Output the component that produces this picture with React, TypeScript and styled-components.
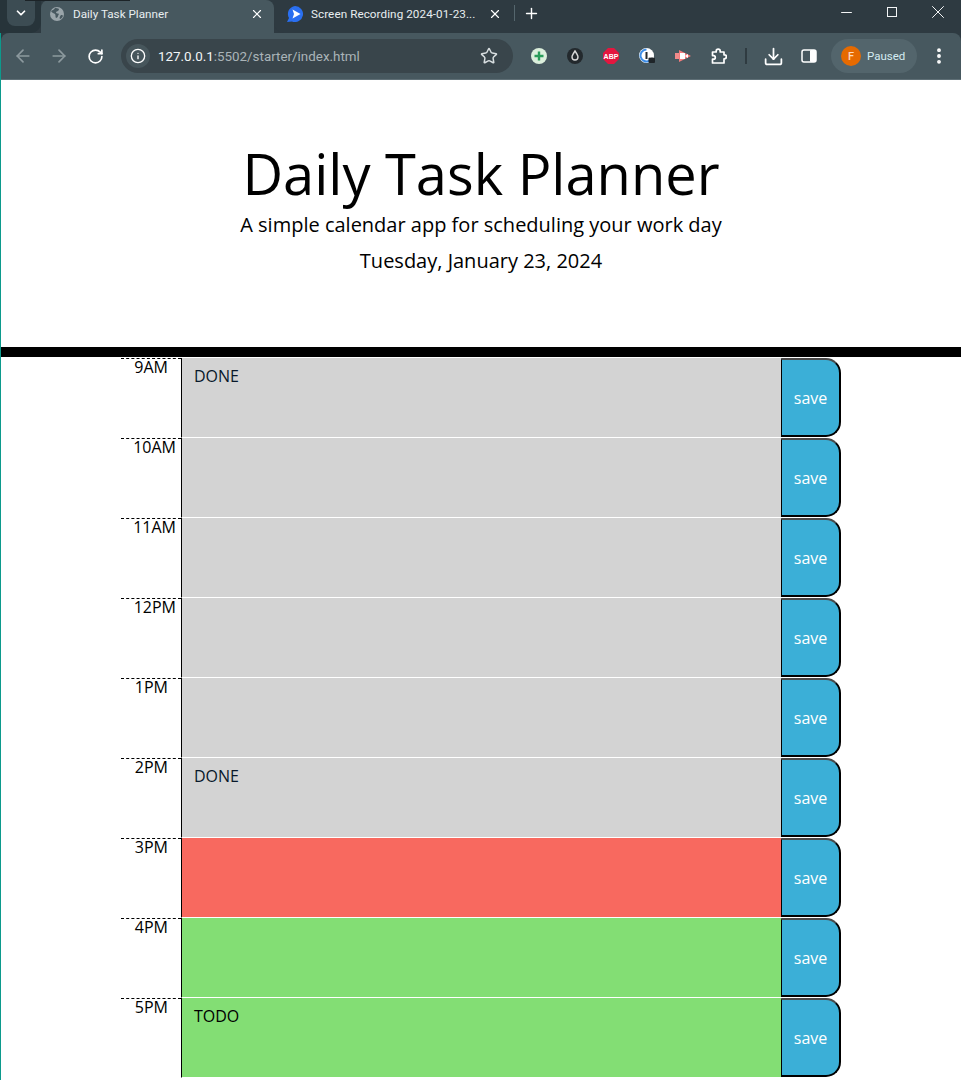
import styled, { createGlobalStyle } from 'styled-components';
import { ArrowLeft, ArrowRight, ChevronDown, Download, EllipsisVertical, Info, Minus, Plus, RotateCw, Star, X } from 'lucide-react';

const GlobalStyle = createGlobalStyle`
  html, body {
    margin: 0;
    padding: 0;
    height: 1080px;
    overflow: hidden;
    background: #fff;
  }
  * {
    box-sizing: border-box;
  }
`;

const Page = styled.div`
  width: 961px;
  height: 1080px;
  overflow: hidden;
  background: #fff;
`;

const TabStrip = styled.div`
  position: relative;
  height: 33px;
  display: flex;
  align-items: flex-start;
  background: #2e3a41;
  font-family: 'Roboto', 'Liberation Sans', sans-serif;
  color: #e8eef0;
  font-size: 11.7px;

  &:before {
    content: '';
    position: absolute;
    top: 0;
    left: 25px;
    width: 105px;
    height: 1px;
    background: #1c2327;
  }
`;

const TabSearch = styled.div`
  width: 41px;
  height: 33px;
  padding: 0 0 6px 7px;
  background: #27343a;
  border-radius: 0 0 10px 0;
  flex: none;
`;

const TabSearchButton = styled.div`
  width: 28px;
  height: 26px;
  border-radius: 0 0 8px 8px;
  background: #3c4c53;
  display: flex;
  align-items: center;
  justify-content: center;
  color: #fff;
`;

const ActiveTab = styled.div`
  width: 233px;
  height: 33px;
  flex: none;
  display: flex;
  align-items: center;
  padding: 0 10px 5px 8px;
  background: #47585f;
  border-radius: 8px 8px 0 0;
`;

const InactiveTab = styled.div`
  width: 240px;
  height: 33px;
  flex: none;
  display: flex;
  align-items: center;
  padding: 0 12px 5px 13px;
  background: #2e3a41;
  border-radius: 0 0 0 10px;
  letter-spacing: 0.07px;
`;

const TabFavicon = styled.svg`
  width: 16px;
  height: 16px;
  flex: none;
  margin-right: 8px;
`;

const TabTitle = styled.span`
  flex: 1;
  white-space: nowrap;
  overflow: hidden;
`;

const TabClose = styled.span`
  display: flex;
  color: #fff;
`;

const TabDivider = styled.span`
  width: 1px;
  height: 16px;
  margin: 5px 0 0 0;
  background: #55666d;
  flex: none;
`;

const NewTab = styled.span`
  display: flex;
  color: #fff;
  margin: 5px 0 0 8px;
`;

const WindowControls = styled.div`
  margin-left: auto;
  display: flex;
  color: #f3f5f6;
  padding: 3px 0 0;
`;

const WindowButton = styled.span`
  width: 46px;
  height: 18px;
  display: flex;
  align-items: center;
  justify-content: center;
`;

const ToolbarFrame = styled.div`
  background: #2e3a41;
  border-left: 1px solid #0c9a8c;
`;

const Toolbar = styled.div`
  height: 47px;
  display: flex;
  align-items: center;
  padding: 0 0 0 4px;
  background: #47585f;
  border-radius: 8px 8px 0 0;
  border-bottom: 1px solid #5f6f76;
  font-family: 'Roboto', 'Liberation Sans', sans-serif;
`;

const NavButton = styled.span<{ $dim?: boolean }>`
  width: 36px;
  display: flex;
  justify-content: center;
  color: ${(p) => (p.$dim ? '#8d9a9f' : '#fff')};
`;

const Omnibox = styled.div`
  width: 392px;
  height: 34px;
  margin-left: 8px;
  padding: 0 15px 0 5px;
  flex: none;
  display: flex;
  align-items: center;
  background: #39454b;
  border-radius: 17px;
  font-size: 13.4px;
  color: #aab4b8;
`;

const SiteInfo = styled.span`
  width: 24px;
  height: 24px;
  border-radius: 50%;
  background: #47565c;
  display: flex;
  align-items: center;
  justify-content: center;
  color: #fff;
  margin-right: 8px;
`;

const Url = styled.span`
  flex: 1;
`;

const Host = styled.span`
  color: #f2f6f7;
`;

const Extensions = styled.div`
  display: flex;
  align-items: center;
  margin-left: 18px;
  gap: 20px;
`;

const ExtIcon = styled.svg`
  width: 16px;
  height: 16px;
  flex: none;
`;

const BadgeText = styled.text`
  font-family: 'Liberation Sans', sans-serif;
  font-size: 7px;
  font-weight: 700;
  fill: #fff;
`;

const ToolDivider = styled.span`
  width: 2px;
  height: 16px;
  margin-left: 18px;
  background: #2f3b41;
  flex: none;
`;

const ToolIcon = styled.span<{ $left: number }>`
  display: flex;
  color: #fff;
  margin-left: ${(p) => p.$left}px;
`;

const ProfilePill = styled.div`
  width: 86px;
  height: 34px;
  margin-left: 14px;
  padding-left: 10px;
  flex: none;
  display: flex;
  align-items: center;
  border-radius: 17px;
  background: #53656c;
  font-size: 11.5px;
  color: #d5ecf2;
`;

const Avatar = styled.span`
  width: 20px;
  height: 20px;
  margin-right: 6px;
  border-radius: 50%;
  background: #e66a00;
  color: #ffd9bd;
  font-size: 11px;
  font-weight: 500;
  display: flex;
  align-items: center;
  justify-content: center;
`;

const Content = styled.div`
  border-left: 1px solid #0c9a8c;
  height: 1000px;
  font-family: 'Open Sans', 'Liberation Sans', sans-serif;
  color: #000;
`;

const Jumbotron = styled.header`
  height: 277px;
  padding-top: 55px;
  text-align: center;
  border-bottom: 10px solid #000;
`;

const Title = styled.h1`
  margin: 0;
  font-size: 56px;
  font-weight: 400;
  line-height: 76px;
`;

const Lead = styled.p`
  margin: 0;
  font-size: 20px;
  line-height: 28px;
`;

const CurrentDay = styled(Lead)`
  margin-top: 8px;
`;

const Planner = styled.main`
  width: 720px;
  margin: 1px 0 0 120px;
`;

const TimeBlock = styled.div`
  display: grid;
  grid-template-columns: 60px 600px 60px;
  align-items: stretch;
  height: 80px;
`;

const Hour = styled.div`
  border-top: 1px dashed #000;
  font-size: 16px;
  line-height: 16px;
  padding: 0 5px 0 0;
  text-align: right;
`;

const HourLabel = styled.span<{ $wide: boolean }>`
  display: block;
  padding-right: ${(p) => (p.$wide ? 0 : 8)}px;
`;

const colours = { past: '#d3d3d3', present: '#f8695f', future: '#83de74' };

const Description = styled.div<{ $state: keyof typeof colours }>`
  background: ${(p) => colours[p.$state]};
  border-left: 1px solid #000;
  border-bottom: 1px solid #fff;
  padding: 8px 12px;
  font-size: 16px;
  line-height: 20px;
  color: ${(p) => (p.$state === 'past' ? '#08182a' : '#000')};
`;

const SaveButton = styled.button`
  padding: 1px 0 0;
  margin: 0;
  height: 79px;
  background: #3bafd7;
  color: #fff;
  font-family: inherit;
  font-size: 16px;
  border-width: 2px 2px 2px 1px;
  border-style: solid;
  border-color: #4a4a4a #000 #000 #000;
  border-radius: 0 15px 15px 0;
`;

const hours: { label: string; state: keyof typeof colours; text?: string }[] = [
  { label: '9AM', state: 'past', text: 'DONE' },
  { label: '10AM', state: 'past' },
  { label: '11AM', state: 'past' },
  { label: '12PM', state: 'past' },
  { label: '1PM', state: 'past' },
  { label: '2PM', state: 'past', text: 'DONE' },
  { label: '3PM', state: 'present' },
  { label: '4PM', state: 'future' },
  { label: '5PM', state: 'future', text: 'TODO' },
];

const App = () => {
  return (
    <Page>
      <GlobalStyle />
      <TabStrip>
        <TabSearch>
          <TabSearchButton>
            <ChevronDown size={14} strokeWidth={3} />
          </TabSearchButton>
        </TabSearch>
        <ActiveTab>
          <TabFavicon viewBox="0 0 16 16">
            <circle cx="8" cy="8" r="7" fill="#9aa5aa" />
            <path d="M6 2c-1 2-3 2-4 3 1 2 3 2 4 3 1 1 0 3 1 4 2 0 2-3 3-4-1-1-3 0-3-2 1-1 3-1 3-3-1-1-3-1-4-1z" fill="#47585f" />
            <path d="M12 9c1 0 2 0 2 1-1 2-2 3-3 3-1-1 0-3 1-4z" fill="#47585f" />
          </TabFavicon>
          <TabTitle>Daily Task Planner</TabTitle>
          <TabClose>
            <X size={14} strokeWidth={2} />
          </TabClose>
        </ActiveTab>
        <InactiveTab>
          <TabFavicon viewBox="0 0 16 16">
            <path d="M8 0a8 8 0 1 1-3 15.400L0 16l2-4A8 8 0 0 1 8 0z" fill="#2a6ff0" />
            <path d="M5.500 3.500l8 4.500-8 4.500 1.500-4.500z" fill="#fff" />
          </TabFavicon>
          <TabTitle>Screen Recording 2024-01-23...</TabTitle>
          <TabClose>
            <X size={14} strokeWidth={2} />
          </TabClose>
        </InactiveTab>
        <TabDivider />
        <NewTab>
          <Plus size={17} strokeWidth={2} />
        </NewTab>
        <WindowControls>
          <WindowButton>
            <Minus size={17} strokeWidth={1} absoluteStrokeWidth />
          </WindowButton>
          <WindowButton>
            <svg width="10" height="10" viewBox="0 0 10 10">
              <rect x="0.500" y="0.500" width="9" height="9" fill="none" stroke="currentColor" />
            </svg>
          </WindowButton>
          <WindowButton>
            <X size={22} strokeWidth={1} absoluteStrokeWidth />
          </WindowButton>
        </WindowControls>
      </TabStrip>
      <ToolbarFrame>
        <Toolbar>
          <NavButton $dim>
            <ArrowLeft size={20} />
          </NavButton>
          <NavButton $dim>
            <ArrowRight size={20} />
          </NavButton>
          <NavButton>
            <RotateCw size={17} strokeWidth={2.4} />
          </NavButton>
          <Omnibox>
            <SiteInfo>
              <Info size={16} />
            </SiteInfo>
            <Url>
              <Host>127.0.0.1</Host>:5502/starter/index.html
            </Url>
            <Star size={18} color="#d8dee0" />
          </Omnibox>
          <Extensions>
            <ExtIcon viewBox="0 0 16 16">
              <circle cx="8" cy="8" r="8" fill="#dcefdc" />
              <path d="M8 3.500v9M3.500 8h9" stroke="#2a9d5a" strokeWidth="2.400" />
            </ExtIcon>
            <ExtIcon viewBox="0 0 16 16">
              <circle cx="8" cy="8" r="8" fill="#23292d" />
              <path d="M8 3c2 3 3 4.500 3 6a3 3 0 0 1-6 0c0-1.500 1-3 3-6z" fill="none" stroke="#d8d8d8" strokeWidth="1.400" />
            </ExtIcon>
            <ExtIcon viewBox="0 0 16 16">
              <path d="M5 0h6l5 5v6l-5 5H5l-5-5V5z" fill="#e4163f" />
              <BadgeText x="8" y="10.500" textAnchor="middle">ABP</BadgeText>
            </ExtIcon>
            <ExtIcon viewBox="0 0 16 16">
              <circle cx="7.500" cy="7.500" r="7.500" fill="#fff" />
              <path d="M7.500 1.500a6 6 0 1 0 3 11.200" fill="none" stroke="#3d8ee8" strokeWidth="2" />
              <rect x="6.500" y="4" width="2" height="7" fill="#23292d" />
              <rect x="9.500" y="9.500" width="6.500" height="5.500" rx="1" fill="#1f2529" />
              <path d="M11 9.500a1.800 1.800 0 0 1 3.600 0" fill="none" stroke="#fff" strokeWidth="1" />
            </ExtIcon>
            <ExtIcon viewBox="0 0 16 16">
              <rect x="0" y="5" width="4" height="6" fill="#f28a8a" />
              <path d="M4 2l12 6-12 6z" fill="#f47c7c" />
              <rect x="5" y="5" width="5" height="6" fill="#fff" />
              <path d="M10 8l3-2v4z" fill="#fff" />
            </ExtIcon>
            <ExtIcon viewBox="0 0 16 16">
              <path d="M1.500 4H5.200V3.200a2 2 0 0 1 4 0V4H13V6.800h.400a2 2 0 0 1 0 4H13V15H1.500V11.200h1a1.800 1.800 0 0 0 0-3.600h-1Z" fill="none" stroke="#fff" strokeWidth="1.700" strokeLinejoin="round" />
            </ExtIcon>
          </Extensions>
          <ToolDivider />
          <ToolIcon $left={16}>
            <Download size={21} strokeWidth={2} />
          </ToolIcon>
          <ToolIcon $left={17}>
            <ExtIcon viewBox="0 0 16 16">
              <rect x="1" y="2" width="14" height="12" rx="2" fill="none" stroke="#fff" strokeWidth="1.500" />
              <rect x="9" y="2" width="6" height="12" rx="1" fill="#fff" />
            </ExtIcon>
          </ToolIcon>
          <ProfilePill>
            <Avatar>F</Avatar>
            Paused
          </ProfilePill>
          <ToolIcon $left={12}>
            <EllipsisVertical size={20} strokeWidth={2.6} />
          </ToolIcon>
        </Toolbar>
      </ToolbarFrame>
      <Content>
        <Jumbotron>
          <Title>Daily Task Planner</Title>
          <Lead>A simple calendar app for scheduling your work day</Lead>
          <CurrentDay>Tuesday, January 23, 2024</CurrentDay>
        </Jumbotron>
        <Planner>
          {hours.map((hour) => (
            <TimeBlock key={hour.label}>
              <Hour>
                <HourLabel $wide={hour.label.length > 3}>{hour.label}</HourLabel>
              </Hour>
              <Description $state={hour.state}>{hour.text}</Description>
              <SaveButton>save</SaveButton>
            </TimeBlock>
          ))}
        </Planner>
      </Content>
    </Page>
  );
};

export default App;
